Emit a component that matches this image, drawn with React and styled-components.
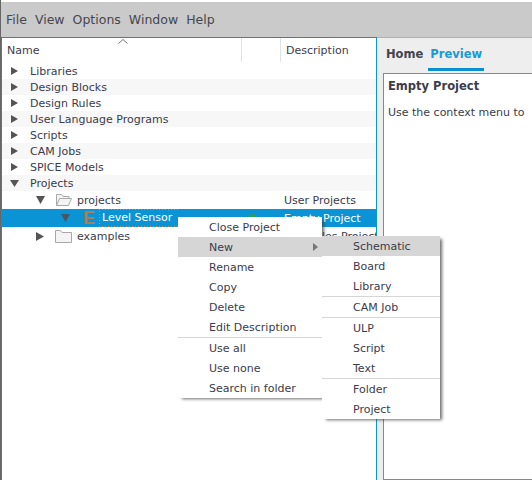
import styled, { createGlobalStyle } from "styled-components";

const GlobalStyle = createGlobalStyle`
  html, body {
    margin: 0;
    height: 100%;
    background: #ffffff;
    overflow: hidden;
  }
  #root {
    height: 100%;
  }
`;

const Window = styled.div`
  position: relative;
  display: flex;
  flex-direction: column;
  width: 532px;
  height: 480px;
  overflow: hidden;
  box-sizing: border-box;
  padding-top: 2px;
  border-left: 1px solid #666666;
  font-family: "DejaVu Sans", sans-serif;
  font-size: 11px;
  color: #3c3c4a;
`;

const MenuBar = styled.div`
  display: flex;
  align-items: center;
  gap: 8px;
  height: 36px;
  padding: 0 0 0 5px;
  box-sizing: border-box;
  background: #cacaca;
  border-bottom: 1px solid #b0b0b0;
  font-size: 12.5px;
  color: #46464e;
`;

const Body = styled.div`
  display: flex;
  flex: 1;
  min-height: 0;
`;

const TreePanel = styled.div`
  position: relative;
  width: 376px;
  box-sizing: border-box;
  border: 1px solid #0a94d6;
  border-bottom: none;
  margin-top: -1px;
  background: #ffffff;
  overflow: hidden;
`;

const SortArrow = styled.svg`
  position: absolute;
  left: 116px;
  top: 1px;
`;

const HeaderRow = styled.div`
  display: grid;
  grid-template-columns: 240px 39px 1fr;
  height: 25px;
`;

const HeaderCell = styled.div`
  display: flex;
  align-items: center;
  height: 24px;
  padding-left: ${(p) => p.$pad}px;
  border-right: ${(p) => (p.$line ? "1px solid #e2e2e2" : "none")};
  box-sizing: border-box;
`;

const Row = styled.div`
  display: grid;
  grid-template-columns: 282px 1fr;
  align-items: center;
  height: ${(p) => (p.$tall ? 18 : 16)}px;
  background: ${(p) => (p.$selected ? "#0a94d6" : p.$alt ? "#f7f7f7" : "#ffffff")};
  color: ${(p) => (p.$selected ? "#ffffff" : "inherit")};
  white-space: nowrap;
`;

const NameCell = styled.div`
  display: flex;
  align-items: center;
  height: 100%;
  padding-left: ${(p) => p.$indent}px;
`;

const Arrow = styled.svg`
  flex: none;
  margin-right: ${(p) => p.$gap}px;
`;

const FolderIcon = styled.svg`
  flex: none;
  margin-right: 5px;
`;

const ProjectLetter = styled.span`
  flex: none;
  width: 16px;
  font-family: "Liberation Sans", sans-serif;
  font-size: 18px;
  font-weight: 700;
  color: #a5805a;
  line-height: 18px;
`;

const FocusLabel = styled.span`
  padding: 0 6px 0 3px;
  line-height: 18px;
  background-image:
    repeating-linear-gradient(90deg, #d98a4c 0 1px, transparent 1px 3px),
    repeating-linear-gradient(90deg, #d98a4c 0 1px, transparent 1px 3px),
    repeating-linear-gradient(0deg, #d98a4c 0 1px, transparent 1px 3px);
  background-size: 100% 1px, 100% 1px, 1px 100%;
  background-position: 0 0, 0 100%, 0 0;
  background-repeat: no-repeat;
`;

const StatusDot = styled.span`
  position: absolute;
  left: 246px;
  top: 176px;
  width: 9px;
  height: 9px;
  border-radius: 50%;
  background: #2f9e5b;
`;

const PreviewPanel = styled.div`
  flex: 1;
  display: flex;
  flex-direction: column;
  min-width: 0;
  background: #eeeeee;
  padding-left: 6px;
`;

const Tabs = styled.div`
  display: flex;
  height: 35px;
  box-sizing: border-box;
  padding-left: 1px;
  gap: 3px;
`;

const Tab = styled.div`
  padding: 9px 2px 0;
  height: 33px;
  box-sizing: border-box;
  font-weight: 700;
  font-size: 11.5px;
  color: ${(p) => (p.$active ? "#1a9ad8" : "#44444c")};
  border-bottom: ${(p) => (p.$active ? "3px solid #0a90d0" : "none")};
`;

const PreviewBox = styled.div`
  flex: 1;
  background: #ffffff;
  border: 1px solid #888888;
  border-right: none;
  padding: 5px 4px;
  white-space: nowrap;
  overflow: hidden;
`;

const PreviewTitle = styled.div`
  font-weight: 700;
  font-size: 11.5px;
  margin-bottom: 13px;
`;

const Menu = styled.div`
  position: absolute;
  left: ${(p) => p.$left}px;
  top: ${(p) => p.$top}px;
  width: ${(p) => p.$width}px;
  background: #ffffff;
  box-shadow: 3px 2px 3px -1px rgba(60, 60, 60, 0.75);
`;

const MenuItem = styled.div`
  position: relative;
  display: flex;
  align-items: center;
  height: 20px;
  padding-left: 31px;
  background: ${(p) => (p.$hover ? "#d6d6d6" : "transparent")};
`;

const MenuSeparator = styled.div`
  height: 1px;
  background: #d6d6d6;
`;

const SubArrow = styled.svg`
  position: absolute;
  right: 4px;
  top: 6px;
`;

const menuNames = ["File", "View", "Options", "Window", "Help"];

const rootItems = [
  "Libraries",
  "Design Blocks",
  "Design Rules",
  "User Language Programs",
  "Scripts",
  "CAM Jobs",
  "SPICE Models",
];

const projectMenu = [
  "Close Project",
  "New",
  "Rename",
  "Copy",
  "Delete",
  "Edit Description",
  null,
  "Use all",
  "Use none",
  "Search in folder",
];

const newMenu = [
  "Schematic",
  "Board",
  "Library",
  null,
  "CAM Job",
  null,
  "ULP",
  "Script",
  "Text",
  null,
  "Folder",
  "Project",
];

const Triangle = ({ open, w = 7, h = 8, gap = 12, color = "#555555" }) => (
  <Arrow $gap={gap} width={w} height={h} viewBox={`0 0 ${w} ${h}`}>
    <path
      d={open ? `M0 0H${w}L${w / 2} ${h}z` : `M0 0L${w} ${h / 2}L0 ${h}z`}
      fill={color}
    />
  </Arrow>
);

const Folder = ({ open }) => (
  <FolderIcon width="17" height="16" viewBox="0 0 17 16">
    {open ? (
      <path
        d="M1.500 13.500V2.500h5l1.500 2h6v2M1.500 13.500l3-7h12l-3 7z"
        fill="#f4f4f4"
        stroke="#a8a8a8"
      />
    ) : (
      <path d="M.5 14.500V2.500h5l1.500 2h9.500v10z" fill="#f4f4f4" stroke="#a8a8a8" />
    )}
  </FolderIcon>
);

const App = () => (
  <Window>
    <GlobalStyle />
    <MenuBar>
      {menuNames.map((name) => (
        <span key={name}>{name}</span>
      ))}
    </MenuBar>
    <Body>
      <TreePanel>
        <SortArrow width="10" height="5" viewBox="0 0 10 5">
          <path d="M.5 4.500L5 .5l4.500 4" fill="none" stroke="#777777" />
        </SortArrow>
        <HeaderRow>
          <HeaderCell $pad={5} $line>Name</HeaderCell>
          <HeaderCell $line />
          <HeaderCell $pad={5}>Description</HeaderCell>
        </HeaderRow>
        {rootItems.map((item, i) => (
          <Row key={item} $alt={i % 2 === 1}>
            <NameCell $indent={9}>
              <Triangle gap={12} />
              {item}
            </NameCell>
          </Row>
        ))}
        <Row $alt>
          <NameCell $indent={8}>
            <Triangle open w={9} h={7} gap={11} />
            Projects
          </NameCell>
        </Row>
        <Row $tall>
          <NameCell $indent={34}>
            <Triangle open w={9} h={8} gap={10} />
            <Folder open />
            projects
          </NameCell>
          <span>User Projects</span>
        </Row>
        <Row $tall $selected>
          <NameCell $indent={59}>
            <Triangle open w={9} h={8} gap={13} color="#4a5560" />
            <ProjectLetter>E</ProjectLetter>
            <FocusLabel>Level Sensor</FocusLabel>
          </NameCell>
          <span>Empty Project</span>
        </Row>
        <Row $tall>
          <NameCell $indent={34}>
            <Triangle w={8} h={9} gap={11} />
            <Folder />
            examples
          </NameCell>
          <span>Examples Project</span>
        </Row>
        <StatusDot />
      </TreePanel>
      <PreviewPanel>
        <Tabs>
          <Tab>Home</Tab>
          <Tab $active>Preview</Tab>
        </Tabs>
        <PreviewBox>
          <PreviewTitle>Empty Project</PreviewTitle>
          Use the context menu to
        </PreviewBox>
      </PreviewPanel>
    </Body>
    <Menu $left={177} $top={217} $width={144}>
      {projectMenu.map((item, i) =>
        item ? (
          <MenuItem key={item} $hover={item === "New"}>
            {item}
            {item === "New" && (
              <SubArrow width="5" height="8" viewBox="0 0 5 8">
                <path d="M0 0l5 4-5 4z" fill="#777777" />
              </SubArrow>
            )}
          </MenuItem>
        ) : (
          <MenuSeparator key={i} />
        )
      )}
    </Menu>
    <Menu $left={321} $top={236} $width={118}>
      {newMenu.map((item, i) =>
        item ? (
          <MenuItem key={item} $hover={item === "Schematic"}>
            {item}
          </MenuItem>
        ) : (
          <MenuSeparator key={i} />
        )
      )}
    </Menu>
  </Window>
);

export default App;
